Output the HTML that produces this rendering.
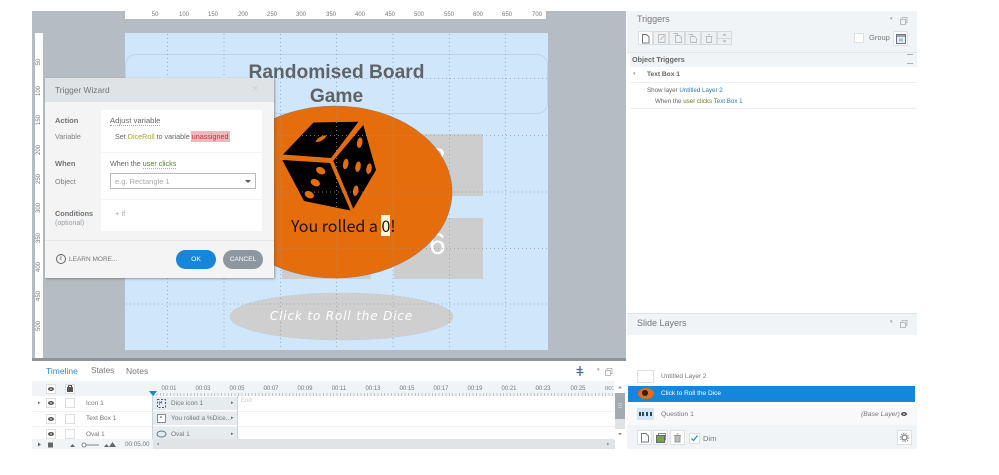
<!DOCTYPE html>
<html><head><meta charset="utf-8"><style>
html,body{margin:0;padding:0;background:#fff}
#p{position:relative;width:999px;height:475px;overflow:hidden;background:#fff;font-family:"Liberation Sans","DejaVu Sans",sans-serif;color:#666}
#p div{position:absolute;box-sizing:border-box}
.t{white-space:nowrap;line-height:1}
.rl{transform:rotate(-90deg);font-size:6px;color:#777;width:20px;text-align:center;line-height:1}
.ru{font-size:6px;color:#777;width:20px;text-align:center;line-height:1;top:12px}
.tk{font-size:6px;color:#777;top:386px;width:24px;text-align:center;line-height:1}
.b{background:#fff;border:1px solid #dde0e3}
.g{background:#eef1f3;border:1px solid #d8dbde}
</style></head><body><div id="p">
<div style="left:32px;top:11px;width:594px;height:347px;background:#b5bcc3"></div>
<div style="left:125px;top:11px;width:421px;height:8px;background:#fff"></div>
<div style="left:35px;top:33px;width:8px;height:325px;background:#fff"></div>
<div class="ru" style="left:145px">50</div><div class="ru" style="left:174px">100</div><div class="ru" style="left:203px">150</div><div class="ru" style="left:233px">200</div><div class="ru" style="left:262px">250</div><div class="ru" style="left:291px">300</div><div class="ru" style="left:321px">350</div><div class="ru" style="left:350px">400</div><div class="ru" style="left:380px">450</div><div class="ru" style="left:409px">500</div><div class="ru" style="left:439px">550</div><div class="ru" style="left:468px">600</div><div class="ru" style="left:497px">650</div><div class="ru" style="left:527px">700</div>
<div class="rl" style="left:29px;top:59px">50</div><div class="rl" style="left:29px;top:88px">100</div><div class="rl" style="left:29px;top:117px">150</div><div class="rl" style="left:29px;top:147px">200</div><div class="rl" style="left:29px;top:176px">250</div><div class="rl" style="left:29px;top:205px">300</div><div class="rl" style="left:29px;top:235px">350</div><div class="rl" style="left:29px;top:264px">400</div><div class="rl" style="left:29px;top:293px">450</div><div class="rl" style="left:29px;top:323px">500</div>
<div style="left:125px;top:33px;width:423px;height:317px;background:#d0e6fa"></div>
<div style="left:125px;top:54px;width:423px;height:60px;border:1px solid #bdd3e6;border-radius:11px"></div>
<div class="t" style="left:125px;width:423px;top:63px;text-align:center;font:bold 19.200px/1 'Liberation Sans',sans-serif;color:#5f6367">Randomised Board</div>
<div class="t" style="left:125px;width:423px;top:87px;text-align:center;font:bold 19.200px/1 'Liberation Sans',sans-serif;color:#5f6367">Game</div>
<div style="left:394px;top:134px;width:89px;height:62px;background:#cdcdcd"></div>
<div style="left:394px;top:218px;width:89px;height:61px;background:#cdcdcd"></div>
<div style="left:282px;top:218px;width:89px;height:61px;background:#cdcdcd"></div>
<div class="t" style="left:429px;top:145px;font-size:30px;color:#fff">8</div>
<div class="t" style="left:429px;top:230px;font-size:30px;color:#fff">6</div>
<svg style="position:absolute;left:0;top:0" width="999" height="475">
<ellipse cx="335" cy="192" rx="117" ry="86" fill="#e56d0b" stroke="#9a7a60" stroke-width=".6"/>
<ellipse cx="341.500" cy="316.500" rx="111.500" ry="23.500" fill="#cfcfcf" stroke="#c6cbd0" stroke-width=".6"/>
<polygon points="313.500,122.500 358.500,121.700 331,158 283,154.500" fill="#000"/>
<polygon points="282.300,160 330,163 350.500,210.500 304,201" fill="#000"/>
<polygon points="363.300,125 376,170 353.300,208.800 333.300,160.700" fill="#000"/>
<g fill="#e56d0b">
<ellipse cx="321" cy="138.700" rx="5.800" ry="1.900" transform="rotate(-30 321 138.700)"/>
<ellipse cx="359.700" cy="142.700" rx="2.700" ry="5.300" transform="rotate(10 359.700 142.700)"/>
<ellipse cx="345.700" cy="164" rx="2.700" ry="5.300" transform="rotate(10 345.700 164)"/>
<ellipse cx="358" cy="166.700" rx="2.700" ry="5.300" transform="rotate(10 358 166.700)"/>
<ellipse cx="369" cy="168.700" rx="2.700" ry="5.300" transform="rotate(10 369 168.700)"/>
<ellipse cx="355.700" cy="190.700" rx="2.700" ry="5.300" transform="rotate(10 355.700 190.700)"/>
<ellipse cx="320.700" cy="170.700" rx="4.900" ry="3.400" transform="rotate(25 320.700 170.700)"/>
<ellipse cx="315.300" cy="182.700" rx="4.900" ry="3.400" transform="rotate(25 315.300 182.700)"/>
<ellipse cx="309.300" cy="194.700" rx="4.900" ry="3.400" transform="rotate(25 309.300 194.700)"/>
</g>
<g stroke="#8f9ba6" stroke-width="1" stroke-dasharray="1 3" fill="none" opacity=".75">
<path d="M167.500 34V349M224 34V349M280.500 34V349M336.500 34V349M393 34V349M449.500 34V349M505.500 34V349"/>
<path d="M126 78.500H547M126 135.500H547M126 192H547M126 248.500H547M126 304H547"/>
</g>
</svg>
<div style="left:381px;top:215px;width:9px;height:21px;background:#fff8dc"></div>
<div class="t" style="left:291px;top:217px;font:16px/1 'Noto Sans CJK JP','DejaVu Sans',sans-serif;color:#1c1207">You rolled a 0!</div>
<div class="t" style="left:230px;width:223px;top:310px;text-align:center;font:italic 12px/1 'DejaVu Sans',sans-serif;color:#fff;letter-spacing:.85px">Click to Roll the Dice</div>

<!-- dialog -->
<div style="left:45px;top:78px;width:229px;height:200px;background:#f4f4f4;box-shadow:1px 1px 2px rgba(80,80,80,.5)"></div>
<div style="left:45px;top:78px;width:229px;height:24px;background:#dfe3e6"></div>
<div class="t" style="left:55px;top:86px;font-size:8.400px;color:#70767b">Trigger Wizard</div>
<div class="t" style="left:252px;top:84px;font-size:11px;color:#c9ced2">×</div>
<div style="left:101px;top:110px;width:161px;height:42px;background:#fff"></div>
<div style="left:101px;top:153px;width:161px;height:46px;background:#fff"></div>
<div style="left:101px;top:200px;width:161px;height:31px;background:#fff"></div>
<div class="t" style="left:55px;top:117px;font-size:7.500px;font-weight:bold;color:#6d7377">Action</div>
<div class="t" style="left:55px;top:133px;font-size:7.200px;color:#7a7f83">Variable</div>
<div class="t" style="left:110px;top:117px;font-size:7.700px;color:#666;border-bottom:1px dotted #aaa">Adjust variable</div>
<div style="left:190.500px;top:130.500px;width:39px;height:11px;background:#f0b8bd"></div>
<div class="t" style="left:115px;top:133px;font-size:7.200px;color:#666">Set <span style="color:#a3a321">DiceRoll</span> to variable <span style="color:#c0313d">unassigned</span></div>
<div class="t" style="left:55px;top:160px;font-size:7.500px;font-weight:bold;color:#6d7377">When</div>
<div class="t" style="left:55px;top:178px;font-size:7.200px;color:#7a7f83">Object</div>
<div class="t" style="left:110px;top:160px;font-size:7.200px;color:#666">When the <span style="color:#55802e;border-bottom:1px dotted #aab">user clicks</span></div>
<div style="left:110px;top:173px;width:146px;height:16px;background:#fff;border:1px solid #b8bcc0"></div>
<div class="t" style="left:115px;top:178px;font-size:7.500px;color:#aaa">e.g. Rectangle 1</div>
<div style="left:245px;top:180px;width:0;height:0;border-left:3px solid transparent;border-right:3px solid transparent;border-top:3px solid #555"></div>
<div class="t" style="left:55px;top:210px;font-size:7.300px;font-weight:bold;color:#6d7377">Conditions</div>
<div class="t" style="left:55px;top:220px;font-size:7px;color:#9a9ea2">(optional)</div>
<div class="t" style="left:115px;top:210px;font-size:7.500px;color:#aaa">+ if</div>
<div style="left:45px;top:240px;width:229px;height:1px;background:#e3e5e7"></div>
<div style="left:56px;top:254px;width:10px;height:10px;border:1px solid #666;border-radius:50%"></div>
<div class="t" style="left:60px;top:256px;font-size:6.500px;font-weight:bold;color:#666">i</div>
<div class="t" style="left:69px;top:257px;font-size:6.500px;color:#777">LEARN MORE...</div>
<div class="t" style="left:176px;top:250px;width:40px;height:19px;border-radius:10px;background:#1586d8;color:#fff;font-size:6.800px;text-align:center;line-height:19px">OK</div>
<div class="t" style="left:223px;top:250px;width:40px;height:19px;border-radius:10px;background:#8f979e;color:#fff;font-size:6.500px;text-align:center;line-height:19px">CANCEL</div>

<!-- right panel -->
<div style="left:627px;top:11px;width:290px;height:438px;background:#fff"></div>
<div style="left:627px;top:11px;width:290px;height:41px;background:#f0f4f7"></div>
<div class="t" style="left:637px;top:15px;font-size:9px;color:#777">Triggers</div>
<div class="t" style="left:890px;top:17px;font-size:5px;color:#999">▾</div>
<div class="b" style="left:638px;top:31px;width:15px;height:14px"></div>
<div class="g" style="left:653px;top:31px;width:16px;height:14px"></div>
<div class="g" style="left:669px;top:31px;width:16px;height:14px"></div>
<div class="g" style="left:685px;top:31px;width:16px;height:14px"></div>
<div class="g" style="left:701px;top:31px;width:16px;height:14px"></div>
<div class="g" style="left:717px;top:31px;width:15px;height:14px"></div>
<div style="left:717px;top:38px;width:15px;height:1px;background:#d0d3d6"></div>
<div style="left:854px;top:33px;width:10px;height:10px;background:#fff;border:1px solid #dde0e3"></div>
<div class="t" style="left:869px;top:34px;font-size:7.500px;color:#777">Group</div>
<div class="b" style="left:893px;top:31px;width:15px;height:15px"></div>
<div style="left:627px;top:52px;width:290px;height:1px;background:#e3e7ea"></div>
<div style="left:630px;top:53px;width:287px;height:14px;background:#f0f4f7"></div>
<div class="t" style="left:632px;top:56px;font-size:7.200px;font-weight:bold;color:#666">Object Triggers</div>
<div class="t" style="left:633px;top:72px;font-size:5px;color:#999">▾</div>
<div class="t" style="left:647px;top:72px;font-size:6.600px;font-weight:bold;color:#666">Text Box 1</div>
<div style="left:630px;top:82px;width:287px;height:1px;background:#eceef0"></div>
<div class="t" style="left:647px;top:88px;font-size:6.200px;color:#666">Show layer <span style="color:#2b7cb5">Untitled Layer 2</span></div>
<div class="t" style="left:655px;top:99px;font-size:6.200px;color:#666">When the <span style="color:#6f7a1e">user clicks</span> <span style="color:#2b7cb5">Text Box 1</span></div>
<div style="left:630px;top:108px;width:287px;height:1px;background:#eceef0"></div>

<div style="left:627px;top:313px;width:290px;height:22px;background:#f0f4f7;border-top:1px solid #e0e4e8"></div>
<div class="t" style="left:637px;top:319px;font-size:9px;color:#777">Slide Layers</div>
<div class="t" style="left:890px;top:320px;font-size:5px;color:#999">▾</div>
<div class="b" style="left:637px;top:370px;width:17px;height:13px"></div>
<div class="t" style="left:661px;top:374px;font-size:6.500px;color:#777">Untitled Layer 2</div>
<div style="left:628px;top:386px;width:287px;height:16px;background:#1586d8"></div>
<div style="left:638px;top:388px;width:16px;height:11px;background:#e56d0b;border-radius:50%"></div>
<div style="left:642px;top:390px;width:6px;height:6px;background:#222;border-radius:50%"></div>
<div class="t" style="left:661px;top:391px;font-size:6.500px;color:#fff">Click to Roll the Dice</div>
<div style="left:627px;top:405px;width:290px;height:20px;background:#f9f9f9"></div>
<div style="left:637px;top:408px;width:17px;height:12px;background:#d0e6fa"></div>
<div style="left:639px;top:412px;width:13px;height:4px;border-top:2px dotted #345;border-bottom:2px dotted #345"></div>
<div class="t" style="left:661px;top:412px;font-size:6.800px;color:#777">Question 1</div>
<div class="t" style="left:861px;top:412px;font-size:6.800px;font-style:italic;color:#777">(Base Layer)</div>
<div style="left:627px;top:425px;width:290px;height:24px;background:#f0f4f7"></div>
<div class="b" style="left:637px;top:430px;width:15px;height:15px"></div>
<div class="b" style="left:653px;top:430px;width:15px;height:15px"></div>
<div class="b" style="left:670px;top:430px;width:15px;height:15px"></div>
<div class="b" style="left:689px;top:433px;width:11px;height:11px"></div>
<div class="t" style="left:703px;top:435px;font-size:7.500px;color:#777">Dim</div>
<div class="b" style="left:897px;top:430px;width:15px;height:15px"></div>

<!-- timeline -->
<div style="left:32px;top:358px;width:594px;height:3px;background:#8f949a"></div>
<div class="t" style="left:46px;top:367px;font-size:8.500px;color:#2e8bd3">Timeline</div>
<div class="t" style="left:91px;top:367px;font-size:8.200px;color:#777">States</div>
<div class="t" style="left:126px;top:367px;font-size:8.500px;color:#777">Notes</div>
<div class="t" style="left:597px;top:368px;font-size:5px;color:#999">▾</div>
<div style="left:32px;top:381px;width:583px;height:15px;background:#f0f4f7"></div>
<div class="b" style="left:46px;top:384px;width:10px;height:10px"></div>
<div class="b" style="left:65px;top:384px;width:10px;height:10px"></div>
<div class="tk" style="left:157px">00:01</div><div class="tk" style="left:191px">00:03</div><div class="tk" style="left:225px">00:05</div><div class="tk" style="left:259px">00:07</div><div class="tk" style="left:293px">00:09</div><div class="tk" style="left:327px">00:11</div><div class="tk" style="left:361px">00:13</div><div class="tk" style="left:395px">00:15</div><div class="tk" style="left:429px">00:17</div><div class="tk" style="left:463px">00:19</div><div class="tk" style="left:497px">00:21</div><div class="tk" style="left:531px">00:23</div><div class="tk" style="left:566px">00:25</div><div class="tk" style="left:605px;width:10px;overflow:hidden;text-align:left">00:27</div>
<div style="left:153px;top:393px;width:461px;height:3px;background:repeating-linear-gradient(90deg,#bcc3c9 0 1px,transparent 1px 3.400px)"></div>
<div style="left:149px;top:391px;width:0;height:0;border-left:4px solid transparent;border-right:4px solid transparent;border-top:5px solid #1586d8"></div>
<div style="left:32px;top:396px;width:583px;height:43px;background:#fff"></div>
<div style="left:32px;top:411px;width:583px;height:1px;background:#f0f2f4"></div>
<div style="left:32px;top:426px;width:583px;height:1px;background:#f0f2f4"></div>
<div style="left:153px;top:397px;width:84px;height:13px;background:#e6ebee"></div>
<div style="left:153px;top:412px;width:84px;height:13px;background:#e6ebee"></div>
<div style="left:153px;top:427px;width:84px;height:12px;background:#e6ebee"></div>
<div style="left:152px;top:396px;width:1px;height:43px;background:#c7d4df"></div>
<div style="left:237px;top:396px;width:1px;height:43px;background:#c7d4df"></div>
<div class="t" style="left:241px;top:398px;font-size:6px;color:#c5c8cb">End</div>
<div class="t" style="left:38px;top:401px;font-size:5px;color:#666">▸</div>
<div class="b" style="left:46px;top:398px;width:10px;height:10px"></div>
<div class="b" style="left:65px;top:398px;width:10px;height:10px"></div>
<div class="b" style="left:46px;top:414px;width:10px;height:10px"></div>
<div class="b" style="left:65px;top:414px;width:10px;height:10px"></div>
<div class="b" style="left:46px;top:429px;width:10px;height:10px"></div>
<div class="b" style="left:65px;top:429px;width:10px;height:10px"></div>
<div class="t" style="left:86px;top:401px;font-size:6.500px;color:#777">Icon 1</div>
<div class="t" style="left:86px;top:416px;font-size:6.500px;color:#777">Text Box 1</div>
<div class="t" style="left:86px;top:432px;font-size:6.500px;color:#777">Oval 1</div>
<div class="t" style="left:171px;top:401px;font-size:6.500px;color:#777">Dice icon 1</div>
<div class="t" style="left:171px;top:416px;font-size:6.500px;color:#777">You rolled a %Dice...</div>
<div class="t" style="left:171px;top:432px;font-size:6.500px;color:#777">Oval 1</div>
<div class="t" style="left:231px;top:401px;font-size:5px;color:#666">▸</div>
<div class="t" style="left:231px;top:416px;font-size:5px;color:#666">▸</div>
<div class="t" style="left:231px;top:432px;font-size:5px;color:#666">▸</div>
<div style="left:32px;top:439px;width:121px;height:10px;background:#f0f4f7"></div>
<div style="left:153px;top:439px;width:462px;height:10px;background:#e1e4e6"></div>
<div class="t" style="left:125px;top:442px;font-size:6.300px;color:#777">00:05.00</div>
<div style="left:614px;top:381px;width:11px;height:12px;background:#fff"></div>
<div style="left:615px;top:393px;width:10px;height:26px;background:#a3abb1"></div>
<div style="left:615px;top:419px;width:10px;height:10px;background:#dfe3e6"></div>
<div style="left:614px;top:429px;width:11px;height:11px;background:#fff"></div>

<!-- icons -->
<svg style="position:absolute;left:0;top:0" width="999" height="475" fill="none">
<g stroke="#aaa" stroke-width=".8"><path d="M900.500 19.500h5v5h-5zM902 19.500v-2h5v5h-1"/><path d="M900.500 322.500h5v5h-5zM902 322.500v-2h5v5h-1"/><path d="M605.500 370.500h5v5h-5zM607 370.500v-2h5v5h-1"/></g>
<g stroke="#999" stroke-width=".8"><path d="M907 54.500h6M907 63.500h6"/></g>
<path d="M642.500 34.500h4l2.500 2.500v6h-6.500z" stroke="#777" fill="#fff"/>
<g stroke="#bbb" stroke-width=".9">
<path d="M658.500 34.500h6.500v8h-6.500zM660 40l4-4"/>
<path d="M675.500 35.500h4l2 2v5h-6zM673.500 33.500h4v2"/>
<path d="M690.500 36.500h4l2 2v4h-6zM688.500 34.500h4v2"/>
<path d="M705.500 36.500h7M706.500 36.500v6h5v-6M708 34.500h2"/>
</g>
<path d="M722.500 35.500l2-2 2 2z M722.500 40.500l2 2 2-2z" fill="#aaa"/>
<path d="M896.500 34.500h9v9h-9z" stroke="#6b7682" fill="#e8eef4"/><path d="M896.500 36h9" stroke="#556"/><path d="M899 38.500h4v3h-4z" fill="#9fc1dc"/>
<path d="M641.500 433.500h4.500l2.500 2.500v6h-7z" stroke="#777" fill="#fff"/>
<path d="M656.500 435.500h8v7h-8z" fill="#7aa24a" stroke="#667"/><path d="M658.500 435.500v-2h7v7" stroke="#667" stroke-width=".8"/>
<path d="M674 435.500h7M675 435.500v6.500h5v-6.500M676.500 434h2" stroke="#999" fill="#bbb"/>
<path d="M691.500 438.500l2 2 4-5" stroke="#1586d8" stroke-width="1.200"/>
<circle cx="904.500" cy="437.500" r="2.500" stroke="#888" stroke-width="1.500"/><circle cx="904.500" cy="437.500" r="4.200" stroke="#888" stroke-dasharray="1.200 1.400"/>
<g fill="#555"><ellipse cx="904" cy="414" rx="3" ry="2"/><ellipse cx="51" cy="389" rx="3" ry="2"/><ellipse cx="51" cy="403" rx="3" ry="2"/><ellipse cx="51" cy="419" rx="3" ry="2"/><ellipse cx="51" cy="434" rx="3" ry="2"/></g>
<g fill="#fff"><circle cx="904" cy="414" r=".8"/><circle cx="51" cy="389" r=".8"/><circle cx="51" cy="403" r=".8"/><circle cx="51" cy="419" r=".8"/><circle cx="51" cy="434" r=".8"/></g>
<path d="M67 387h6v5h-6z" fill="#555"/><path d="M68.500 387v-1.500h3v1.500" stroke="#555"/>
<path d="M580 366v10M576.500 369.500h6M576.500 372.500h7" stroke="#4a6a88" stroke-width="1.300"/>
<path d="M157.500 399.500h8v8h-8z" stroke="#557" stroke-dasharray="2 1.500"/><path d="M159.500 405v-3l2 1v-2" stroke="#557" stroke-width=".7"/>
<path d="M157.500 414.500h8v8h-8z" stroke="#889" fill="#fff"/><path d="M160 417h2" stroke="#557"/>
<ellipse cx="161.500" cy="434" rx="4.500" ry="3" stroke="#5a7a9a"/>
<path d="M38 442.500l3 2-3 2z" fill="#666"/><path d="M48 442.500h5v5h-5z" fill="#666"/>
<path d="M70 447l2.500-3 2.500 3z" fill="#666"/><path d="M86 445h13" stroke="#666" stroke-width=".8"/><circle cx="84" cy="445" r="2" stroke="#666" stroke-width=".8" fill="#fff"/>
<path d="M104 447l2.500-3 2.500 3zM109 447l3.500-5 3.500 5z" fill="#666"/>
<path d="M159 442.500l-2.500 1.500 2.500 1.500z M607 442.500l2.500 1.500-2.500 1.500z" fill="#999"/>
<path d="M618 388.500l2-2.500 2 2.500z M618 433l2 2.500 2-2.500z" fill="#999"/><path d="M618 403.500h4M618 405.500h4M618 407.500h4" stroke="#d5d8db" stroke-width=".8"/>
</svg>
</div></body></html>
